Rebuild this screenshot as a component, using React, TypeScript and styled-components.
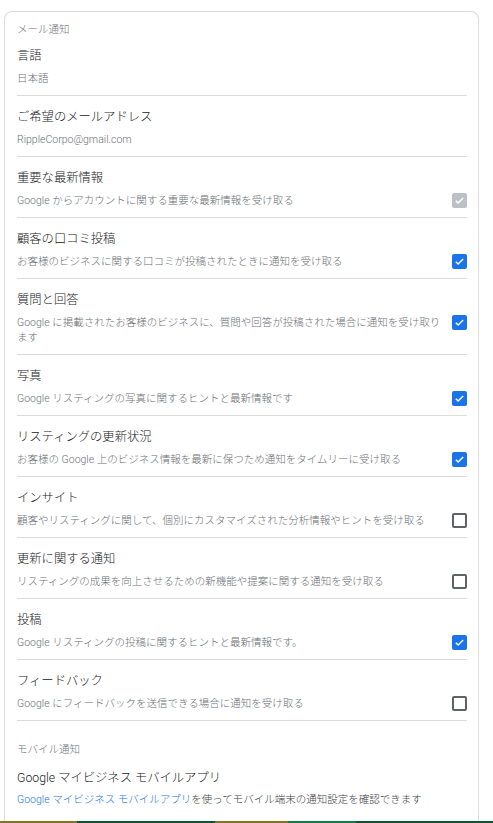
import React, { FC } from "react";
import styled, { createGlobalStyle } from "styled-components";

interface Setting {
  title: string;
  desc: string;
  state?: "on" | "off" | "locked";
}

const settings: Setting[] = [
  { title: "重要な最新情報", desc: "Google からアカウントに関する重要な最新情報を受け取る", state: "locked" },
  { title: "顧客の口コミ投稿", desc: "お客様のビジネスに関する口コミが投稿されたときに通知を受け取る", state: "on" },
  {
    title: "質問と回答",
    desc: "Google に掲載されたお客様のビジネスに、質問や回答が投稿された場合に通知を受け取ります",
    state: "on",
  },
  { title: "写真", desc: "Google リスティングの写真に関するヒントと最新情報です", state: "on" },
  {
    title: "リスティングの更新状況",
    desc: "お客様の Google 上のビジネス情報を最新に保つため通知をタイムリーに受け取る",
    state: "on",
  },
  {
    title: "インサイト",
    desc: "顧客やリスティングに関して、個別にカスタマイズされた分析情報やヒントを受け取る",
    state: "off",
  },
  { title: "更新に関する通知", desc: "リスティングの成果を向上させるための新機能や提案に関する通知を受け取る", state: "off" },
  { title: "投稿", desc: "Google リスティングの投稿に関するヒントと最新情報です。", state: "on" },
  { title: "フィードバック", desc: "Google にフィードバックを送信できる場合に通知を受け取る", state: "off" },
];

const App: FC = () => {
  return (
    <>
      <GlobalStyle />
      <Page>
        <Card>
          <SectionLabel>メール通知</SectionLabel>
          <Item $first>
            <Title>言語</Title>
            <Desc>日本語</Desc>
          </Item>
          <Item>
            <Title>ご希望のメールアドレス</Title>
            <Desc>RippleCorpo@gmail.com</Desc>
          </Item>
          {settings.map((s) => (
            <Item key={s.title}>
              <Title>{s.title}</Title>
              <Row>
                <Desc>{s.desc}</Desc>
                <Check $state={s.state || "off"}>
                  {s.state !== "off" && (
                    <svg width="11" height="11" viewBox="0 0 24 24">
                      <path d="M4 12.5l5 5L20 6.5" fill="none" stroke="#fff" strokeWidth="3.2" />
                    </svg>
                  )}
                </Check>
              </Row>
            </Item>
          ))}
          <Mobile>
            <SectionLabel>モバイル通知</SectionLabel>
            <AppTitle>Google マイビジネス モバイルアプリ</AppTitle>
            <AppNote>
              <a href="#">Google マイビジネス モバイルアプリ</a>を使ってモバイル端末の通知設定を確認できます
            </AppNote>
          </Mobile>
        </Card>
        <Strip>
          <Seg $c="#847524" $w={77} />
          <Seg $c="#0b5530" $w={152} />
          <Seg $c="#847524" $w={73} />
          <Seg $c="#0d7f47" $w={68} />
          <Seg $c="#0b5530" $w={123} />
        </Strip>
      </Page>
    </>
  );
};

const GlobalStyle = createGlobalStyle`
  body {
    margin: 0;
    background: #fff;
    font-family: Roboto, "Noto Sans CJK JP", sans-serif;
  }
`;

const Page = styled.div`
  height: 823px;
  display: flex;
  flex-direction: column;
  overflow: hidden;
`;

const Card = styled.div`
  flex: 1;
  margin: 11px 14px 0 4px;
  padding: 11px 11px 0 12px;
  border: 1px solid #dadce0;
  border-bottom: none;
  border-radius: 8px 8px 0 0;
  overflow: hidden;
`;

const SectionLabel = styled.div`
  font-size: 10.5px;
  line-height: 14px;
  font-weight: 300;
  color: #70757a;
`;

const Item = styled.div<{ $first?: boolean }>`
  padding: ${(p) => (p.$first ? "9px" : "11px")} 0 9px;
  border-bottom: 1px solid #dadce0;
`;

const Title = styled.div`
  font-size: 12.3px;
  line-height: 20px;
  font-weight: 300;
  color: #202124;
`;

const Row = styled.div`
  display: flex;
  align-items: flex-start;
  gap: 8px;
`;

const Desc = styled.div`
  flex: 1;
  margin-top: 5px;
  font-size: 10.5px;
  line-height: 15px;
  font-weight: 300;
  color: #6b6f74;
`;

const Check = styled.span<{ $state: "on" | "off" | "locked" }>`
  flex: none;
  width: 15px;
  height: 15px;
  box-sizing: border-box;
  border-radius: 2px;
  display: flex;
  align-items: center;
  justify-content: center;
  background: ${(p) => (p.$state === "on" ? "#1a73e8" : p.$state === "locked" ? "#bdc1c6" : "#fff")};
  border: ${(p) => (p.$state === "off" ? "2px solid #5f6368" : "none")};
  margin-top: 5px;
`;

const Mobile = styled.div`
  padding-top: 22px;
`;

const AppTitle = styled.div`
  margin-top: 11px;
  font-size: 12.3px;
  line-height: 20px;
  font-weight: 300;
  color: #202124;
`;

const AppNote = styled.div`
  margin-top: 4px;
  font-size: 10.5px;
  line-height: 15px;
  font-weight: 300;
  color: #3c4043;

  a {
    color: #1a73e8;
    text-decoration: none;
  }
`;

const Strip = styled.div`
  display: flex;
  height: 2px;
  flex: none;
`;

const Seg = styled.div<{ $c: string; $w: number }>`
  background: ${(p) => p.$c};
  width: ${(p) => p.$w}px;
  flex: ${(p) => (p.$w > 100 && p.$c === "#0b5530" ? "1" : "none")};
`;

export default App;
